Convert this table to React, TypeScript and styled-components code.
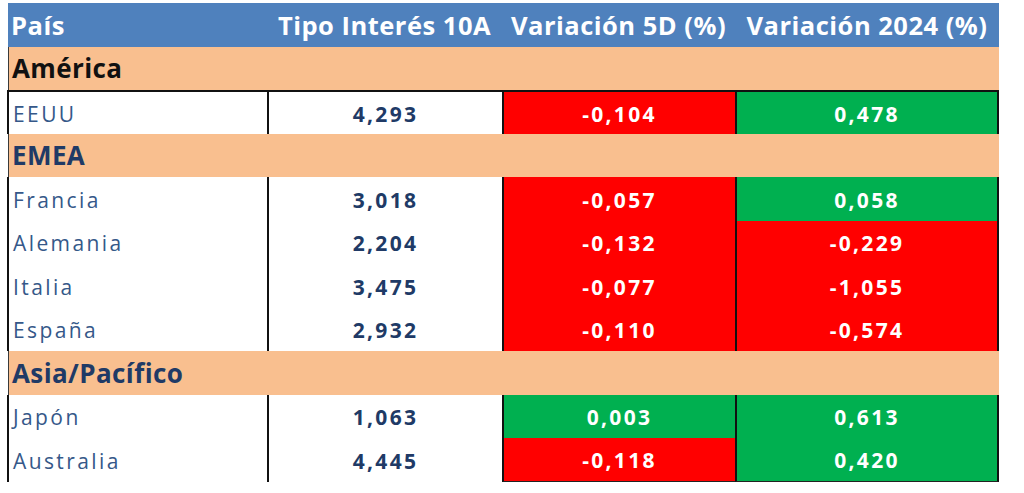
import React from "react";
import styled, { createGlobalStyle } from "styled-components";

const GlobalStyle = createGlobalStyle`
  html, body {
    margin: 0;
    padding: 0;
    background: #ffffff;
  }
  body {
    font-family: "Open Sans", "Liberation Sans", sans-serif;
  }
`;

const Page = styled.div`
  padding: 3px 0 0 7px;
`;

const Table = styled.div`
  width: 992px;
  display: flex;
  flex-direction: column;
`;

const Row = styled.div`
  display: grid;
  grid-template-columns: 260px 235px 233px 264px;
  height: 43.5px;
  box-sizing: border-box;
`;

const HeaderRow = styled(Row)`
  background: #4f81bd;
  margin-left: 1px;
  grid-template-columns: 259px 235px 233px 264px;
`;

const HeaderCell = styled.div<{ $align?: "left" | "center" }>`
  display: flex;
  align-items: center;
  justify-content: ${(p) => (p.$align === "left" ? "flex-start" : "center")};
  padding-left: ${(p) => (p.$align === "left" ? "3px" : "0")};
  padding-top: 1px;
  color: #ffffff;
  font-weight: 700;
  font-size: 25.5px;
  letter-spacing: 0.5px;
  white-space: nowrap;
`;

const SectionRow = styled.div`
  height: 43.5px;
  box-sizing: border-box;
  background: #f9bf8f;
  margin-left: 1px;
  display: flex;
  align-items: center;
  padding-left: 3px;
  border-left: 1px solid #3a3a3a;
`;

const SectionLabel = styled.span<{ $color: string }>`
  color: ${(p) => p.$color};
  font-weight: 700;
  font-size: 26px;
  letter-spacing: 0.4px;
`;

const DataRow = styled(Row)<{ $top?: boolean }>`
  border-top: ${(p) => (p.$top ? "2px solid #111" : "none")};
`;

const Cell = styled.div<{ $tone?: "red" | "green" | "none"; $last?: boolean; $bottom?: boolean }>`
  display: flex;
  align-items: center;
  box-sizing: border-box;
  border-left: 2px solid #111;
  border-right: ${(p) => (p.$last ? "2px solid #111" : "none")};
  border-bottom: ${(p) => (p.$bottom ? "1px solid #222" : "none")};
  background: ${(p) =>
    p.$tone === "red" ? "#ff0000" : p.$tone === "green" ? "#00b050" : "#ffffff"};
  padding-top: 2px;
`;

const CountryCell = styled(Cell)`
  padding-left: 4px;
  color: #355889;
  font-size: 21px;
  letter-spacing: 2.4px;
`;

const ValueCell = styled(Cell)<{ $light?: boolean }>`
  justify-content: center;
  font-weight: 700;
  font-size: 21px;
  letter-spacing: 2.3px;
  color: ${(p) => (p.$light ? "#ffffff" : "#203a66")};
`;

type Entry = { country: string; rate: string; d5: string; y24: string };
type Section = { name: string; color: string; rows: Entry[] };

const sections: Section[] = [
  {
    name: "América",
    color: "#111111",
    rows: [{ country: "EEUU", rate: "4,293", d5: "-0,104", y24: "0,478" }],
  },
  {
    name: "EMEA",
    color: "#203a66",
    rows: [
      { country: "Francia", rate: "3,018", d5: "-0,057", y24: "0,058" },
      { country: "Alemania", rate: "2,204", d5: "-0,132", y24: "-0,229" },
      { country: "Italia", rate: "3,475", d5: "-0,077", y24: "-1,055" },
      { country: "España", rate: "2,932", d5: "-0,110", y24: "-0,574" },
    ],
  },
  {
    name: "Asia/Pacífico",
    color: "#203a66",
    rows: [
      { country: "Japón", rate: "1,063", d5: "0,003", y24: "0,613" },
      { country: "Australia", rate: "4,445", d5: "-0,118", y24: "0,420" },
    ],
  },
];

const tone = (v: string) => (v.startsWith("-") ? "red" : "green");

export default function App() {
  return (
    <Page>
      <GlobalStyle />
      <Table>
        <HeaderRow>
          <HeaderCell $align="left">País</HeaderCell>
          <HeaderCell>Tipo Interés 10A</HeaderCell>
          <HeaderCell>Variación 5D (%)</HeaderCell>
          <HeaderCell>Variación 2024 (%)</HeaderCell>
        </HeaderRow>
        {sections.map((s, si) => (
          <React.Fragment key={s.name}>
            <SectionRow>
              <SectionLabel $color={s.color}>{s.name}</SectionLabel>
            </SectionRow>
            {s.rows.map((r, ri) => {
              const isLast = si === sections.length - 1 && ri === s.rows.length - 1;
              return (
                <DataRow key={r.country} $top={si === 0 && ri === 0}>
                  <CountryCell>{r.country}</CountryCell>
                  <ValueCell>{r.rate}</ValueCell>
                  <ValueCell $tone={tone(r.d5)} $light $bottom={isLast}>
                    {r.d5}
                  </ValueCell>
                  <ValueCell $tone={tone(r.y24)} $light $last $bottom={isLast}>
                    {r.y24}
                  </ValueCell>
                </DataRow>
              );
            })}
          </React.Fragment>
        ))}
      </Table>
    </Page>
  );
}
